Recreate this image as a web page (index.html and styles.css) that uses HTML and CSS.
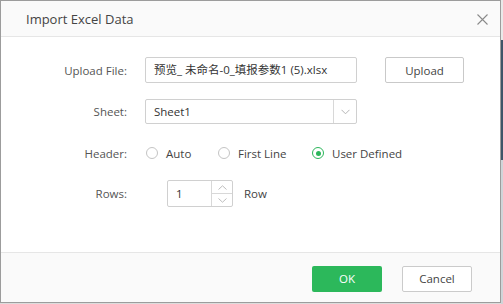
FILE: index.html
```html
<!DOCTYPE html>
<html>
<head>
<meta charset="utf-8">
<link rel="stylesheet" href="styles.css">
</head>
<body>
<div class="stage">
  <div class="dialog">
    <div class="dlg-head">
      <span class="dlg-title">Import Excel Data</span>
      <svg class="close" width="11" height="11" viewBox="0 0 11 11"><path d="M0.5 0.5L10.5 10.5M10.5 0.5L0.5 10.5" stroke="#8a8a8a" stroke-width="1.1" fill="none"/></svg>
    </div>
    <div class="dlg-body">
      <div class="row r-file">
        <label class="lbl">Upload File:</label>
        <div class="field file-input">预览_ 未命名-0_填报参数1 (5).xlsx</div>
        <button class="btn btn-upload">Upload</button>
      </div>
      <div class="row r-sheet">
        <label class="lbl">Sheet:</label>
        <div class="field select">
          <span class="sel-text">Sheet1</span>
          <span class="sel-arrow"><svg width="9" height="6" viewBox="0 0 9 6"><path d="M0.5 0.8L4.5 4.8L8.5 0.8" stroke="#b5b5b5" stroke-width="1" fill="none"/></svg></span>
        </div>
      </div>
      <div class="row r-header">
        <label class="lbl">Header:</label>
        <div class="radios">
          <span class="radio r-auto"><span class="circle"></span>Auto</span>
          <span class="radio r-first"><span class="circle"></span>First Line</span>
          <span class="radio"><span class="circle on"></span>User Defined</span>
        </div>
      </div>
      <div class="row r-rows">
        <label class="lbl">Rows:</label>
        <div class="spinner">
          <span class="spin-val">1</span>
          <span class="spin-btns">
            <span class="spin-b"><svg width="9" height="5" viewBox="0 0 9 5"><path d="M0.5 4.5L4.5 0.8L8.5 4.5" stroke="#bdbdbd" stroke-width="1" fill="none"/></svg></span>
            <span class="spin-b down"><svg width="9" height="5" viewBox="0 0 9 5"><path d="M0.5 0.5L4.5 4.2L8.5 0.5" stroke="#bdbdbd" stroke-width="1" fill="none"/></svg></span>
          </span>
        </div>
        <span class="unit">Row</span>
      </div>
    </div>
    <div class="dlg-foot">
      <button class="btn btn-ok">OK</button>
      <button class="btn btn-cancel">Cancel</button>
    </div>
  </div>
  <div class="side"></div>
</div>
</body>
</html>
```

FILE: styles.css
```css
html, body {
  margin: 0;
  padding: 0;
  background: #ffffff;
}
body {
  font-family: "Open Sans", "Noto Sans CJK SC", sans-serif;
  font-size: 11.5px;
  color: #333;
}
.stage {
  display: flex;
  width: 503px;
  height: 304px;
  overflow: hidden;
  background: #dcdcdc;
}
.side {
  flex: 1;
  background: linear-gradient(#e9e9e9 0, #e9e9e9 40px, #3e5568 40px, #3e5568 160px, #d0d4d8 160px);
}
.dialog {
  width: 499px;
  height: 301px;
  border: 1px solid #9c9c9c;
  background: #fff;
  display: flex;
  flex-direction: column;
}
.dlg-head {
  height: 35px;
  background: #fafafa;
  border-bottom: 1px solid #e6e6e6;
  display: flex;
  align-items: center;
  justify-content: space-between;
  padding: 0 12px 0 25px;
}
.dlg-title {
  font-size: 13px;
  color: #444;
}
.close {
  margin-top: 1px;
}
.dlg-body {
  flex: 1;
  padding-top: 20px;
}
.row {
  display: flex;
  align-items: center;
}
.lbl {
  width: 126px;
  text-align: right;
  color: #555;
  margin-right: 18px;
  flex: none;
}
.field {
  box-sizing: border-box;
  border: 1px solid #d0d0d0;
  border-radius: 2px;
  background: #fff;
  color: #333;
}
.file-input {
  width: 212px;
  height: 26px;
  line-height: 24px;
  padding-left: 8px;
  white-space: nowrap;
  overflow: hidden;
}
.btn {
  font-family: inherit;
  font-size: 11.5px;
  box-sizing: border-box;
  border-radius: 2px;
  height: 26px;
  padding: 0;
  cursor: pointer;
}
.btn-upload {
  margin-left: 28px;
  width: 79px;
  border: 1px solid #c9c9c9;
  background: #fff;
  color: #444;
}
.r-sheet {
  margin-top: 16px;
}
.select {
  width: 212px;
  height: 25px;
  display: flex;
  align-items: stretch;
}
.sel-text {
  flex: 1;
  padding-left: 8px;
  line-height: 23px;
}
.sel-arrow {
  width: 22px;
  border-left: 1px solid #d8d8d8;
  display: flex;
  align-items: center;
  justify-content: center;
}
.r-header {
  margin-top: 16px;
  height: 26px;
}
.radios {
  display: flex;
  align-items: center;
  margin-left: 1px;
}
.radio {
  display: flex;
  align-items: center;
  color: #444;
}
.r-auto {
  width: 72px;
}
.r-first {
  width: 94px;
}
.circle {
  box-sizing: border-box;
  width: 12px;
  height: 12px;
  border: 1px solid #c4c4c4;
  border-radius: 50%;
  margin-right: 8px;
  position: relative;
}
.circle.on {
  border-color: #2bb65a;
}
.circle.on::after {
  content: "";
  position: absolute;
  left: 2.5px;
  top: 2.5px;
  width: 5px;
  height: 5px;
  border-radius: 50%;
  background: #2bb65a;
}
.r-rows {
  margin-top: 14px;
}
.spinner {
  margin-left: 22px;
  box-sizing: border-box;
  width: 66px;
  height: 27px;
  border: 1px solid #d0d0d0;
  border-radius: 2px;
  display: flex;
}
.spin-val {
  flex: 1;
  padding-left: 8px;
  line-height: 25px;
}
.spin-btns {
  width: 20px;
  border-left: 1px solid #d8d8d8;
  display: flex;
  flex-direction: column;
}
.spin-b {
  flex: 1;
  display: flex;
  align-items: center;
  justify-content: center;
}
.spin-b.down {
  border-top: 1px solid #d8d8d8;
}
.unit {
  margin-left: 11px;
  color: #444;
}
.dlg-foot {
  height: 49px;
  border-top: 1px solid #e6e6e6;
  background: #fafafa;
  display: flex;
  align-items: center;
  justify-content: flex-end;
  padding-right: 28px;
}
.btn-ok {
  width: 70px;
  border: none;
  background: #2cb85b;
  color: #fff;
  margin-top: 2px;
}
.btn-cancel {
  width: 70px;
  margin-left: 20px;
  border: 1px solid #cbcbcb;
  background: #fff;
  color: #444;
  margin-top: 2px;
}
```
